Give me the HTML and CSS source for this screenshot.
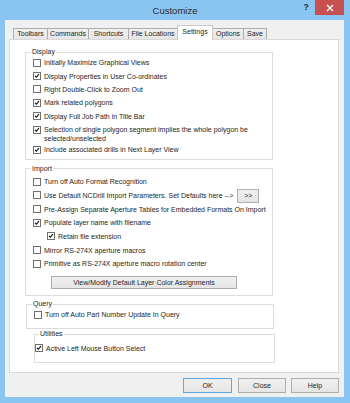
FILE: index.html
```html
<!DOCTYPE html>
<html>
<head>
<meta charset="utf-8">
<link rel="stylesheet" href="styles.css">
</head>
<body>
<div class="window">
  <div class="titlebar">
    <div></div>
    <div class="title">Customize</div>
    <div class="caption-btns">
      <div class="help-q">?</div>
      <div class="close-x">
        <svg width="8" height="8" viewBox="0 0 8 8"><path d="M1 1 L7 7 M7 1 L1 7" stroke="#fff" stroke-width="1.3"/></svg>
      </div>
    </div>
  </div>
  <div class="client">
    <div class="tabs">
      <div class="tab w-toolbars">Toolbars</div>
      <div class="tab w-commands">Commands</div>
      <div class="tab w-shortcuts">Shortcuts</div>
      <div class="tab w-files">File Locations</div>
      <div class="tab active w-settings">Settings</div>
      <div class="tab w-options">Options</div>
      <div class="tab w-save">Save</div>
    </div>
    <div class="panel">
      <fieldset class="group g-display">
        <legend>Display</legend>
        <div class="row"><span class="cb"></span><span class="lbl">Initially Maximize Graphical Views</span></div>
        <div class="row"><span class="cb on"><svg viewBox="0 0 8 8"><path d="M1.4 3.9 L3.1 5.7 L6.6 1.6" fill="none" stroke="#000" stroke-width="1.4"/></svg></span><span class="lbl">Display Properties in User Co-ordinates</span></div>
        <div class="row"><span class="cb"></span><span class="lbl">Right Double-Click to Zoom Out</span></div>
        <div class="row"><span class="cb on"><svg viewBox="0 0 8 8"><path d="M1.4 3.9 L3.1 5.7 L6.6 1.6" fill="none" stroke="#000" stroke-width="1.4"/></svg></span><span class="lbl">Mark related polygons</span></div>
        <div class="row"><span class="cb on"><svg viewBox="0 0 8 8"><path d="M1.4 3.9 L3.1 5.7 L6.6 1.6" fill="none" stroke="#000" stroke-width="1.4"/></svg></span><span class="lbl">Display Full Job Path in Title Bar</span></div>
        <div class="row wrap"><span class="cb on"><svg viewBox="0 0 8 8"><path d="M1.4 3.9 L3.1 5.7 L6.6 1.6" fill="none" stroke="#000" stroke-width="1.4"/></svg></span><span class="lbl wide">Selection of single polygon segment implies the whole polygon be selected/unselected</span></div>
        <div class="row"><span class="cb on"><svg viewBox="0 0 8 8"><path d="M1.4 3.9 L3.1 5.7 L6.6 1.6" fill="none" stroke="#000" stroke-width="1.4"/></svg></span><span class="lbl">Include associated drills in Next Layer View</span></div>
      </fieldset>
      <fieldset class="group g-import">
        <legend>Import</legend>
        <div class="row irow"><span class="cb"></span><span class="lbl">Turn off Auto Format Recognition</span></div>
        <div class="row irow"><span class="cb"></span><span class="lbl">Use Default NCDrill Import Parameters. Set Defaults here --&gt;</span><span class="btn small-btn">&gt;&gt;</span></div>
        <div class="row irow"><span class="cb"></span><span class="lbl">Pre-Assign Separate Aperture Tables for Embedded Formats On Import</span></div>
        <div class="row irow"><span class="cb on"><svg viewBox="0 0 8 8"><path d="M1.4 3.9 L3.1 5.7 L6.6 1.6" fill="none" stroke="#000" stroke-width="1.4"/></svg></span><span class="lbl">Populate layer name with filename</span></div>
        <div class="row irow indent"><span class="cb on"><svg viewBox="0 0 8 8"><path d="M1.4 3.9 L3.1 5.7 L6.6 1.6" fill="none" stroke="#000" stroke-width="1.4"/></svg></span><span class="lbl">Retain file extension</span></div>
        <div class="row irow"><span class="cb"></span><span class="lbl">Mirror RS-274X aperture macros</span></div>
        <div class="row irow"><span class="cb"></span><span class="lbl">Primitive as RS-274X aperture macro rotation center</span></div>
        <div class="btn wide-btn">View/Modify Default Layer Color Assignments</div>
      </fieldset>
      <fieldset class="group g-query">
        <legend>Query</legend>
        <div class="row"><span class="cb"></span><span class="lbl">Turn off Auto Part Number Update In Query</span></div>
      </fieldset>
      <fieldset class="group g-util">
        <legend>Utilities</legend>
        <div class="row"><span class="cb on"><svg viewBox="0 0 8 8"><path d="M1.4 3.9 L3.1 5.7 L6.6 1.6" fill="none" stroke="#000" stroke-width="1.4"/></svg></span><span class="lbl">Active Left Mouse Button Select</span></div>
      </fieldset>
    </div>
    <div class="buttons">
      <div class="btn dlg-btn default">OK</div>
      <div class="btn dlg-btn b-close">Close</div>
      <div class="btn dlg-btn b-help">Help</div>
    </div>
  </div>
</div>
</body>
</html>
```

FILE: styles.css
```css
html, body {
  margin: 0;
  padding: 0;
}
body {
  width: 350px;
  height: 403px;
  overflow: hidden;
  font-family: "Liberation Sans", Arial, sans-serif;
  font-size: 7px;
  color: #1e1e1e;
}
.window {
  width: 350px;
  height: 403px;
  background: #8ac4f0;
  display: flex;
  flex-direction: column;
  box-sizing: border-box;
}
.titlebar {
  height: 20px;
  display: grid;
  grid-template-columns: 1fr auto 1fr;
  flex: none;
}
.title {
  font-size: 9.5px;
  color: #2a2a2a;
  line-height: 20px;
  padding-top: 1px;
}
.caption-btns {
  display: flex;
  justify-content: flex-end;
  align-items: flex-start;
  padding-right: 6px;
}
.help-q {
  width: 20px;
  height: 15px;
  line-height: 15px;
  text-align: center;
  font-weight: bold;
  font-size: 8.5px;
  color: #1d2b3c;
  margin-right: -1px;
}
.close-x {
  width: 29px;
  height: 15px;
  background: #c75050;
  display: flex;
  align-items: center;
  justify-content: center;
}
.close-x svg { display: block; }
.client {
  flex: 1;
  margin: 0 6px 6px 5px;
  background: #f0f0f0;
  padding: 5px 5px 0 4px;
  display: flex;
  flex-direction: column;
}
.tabs {
  display: flex;
  align-items: flex-end;
  height: 14px;
  padding-left: 4px;
}
.tab {
  box-sizing: border-box;
  height: 11px;
  line-height: 10px;
  text-align: center;
  border: 1px solid #adadad;
  border-bottom: none;
  background: linear-gradient(#f0f0f0, #e5e5e5);
  white-space: nowrap;
  margin-right: -1px;
}
.tab.active {
  height: 15px;
  line-height: 12px;
  background: #fff;
  margin-bottom: -1px;
  position: relative;
  z-index: 1;
  border-color: #c8c8c8;
}
.w-toolbars { width: 35px; }
.w-commands { width: 42px; }
.w-shortcuts { width: 41px; }
.w-files { width: 50px; }
.w-settings { width: 36px; }
.w-options { width: 32px; }
.w-save { width: 24px; }
.panel {
  box-sizing: border-box;
  width: 330px;
  height: 334px;
  background: #fff;
  border: 1px solid #d9d9d9;
  display: flex;
  flex-direction: column;
  align-items: flex-start;
}
.group {
  box-sizing: border-box;
  border: 1px solid #dcdcdc;
  margin: 0;
  padding: 0 0 0 0;
  min-width: 0;
}
.group legend {
  line-height: 8px;
  padding: 0 1px;
  margin-left: 5px;
  color: #1e1e1e;
}
.g-display {
  width: 248px;
  margin: 8px 0 0 15px;
  padding-bottom: 2px;
}
.g-import {
  width: 248px;
  margin: 5px 0 0 15px;
  padding-top: 2.6px;
  padding-bottom: 6px;
}
.g-query {
  width: 248px;
  margin: 4px 0 0 16px;
  padding-bottom: 7px;
}
.g-util {
  width: 241px;
  margin: 1px 0 0 24px;
  padding-top: 3.3px;
  padding-bottom: 7px;
}
.g-util legend { margin-left: 4px; }
.row {
  box-sizing: border-box;
  height: 13.4px;
  padding: 2.2px 0 0 7px;
  display: flex;
  align-items: flex-start;
  line-height: 9px;
  white-space: nowrap;
}
.g-util .row { padding-left: 0; }
.row.wrap {
  height: 20.2px;
  white-space: normal;
}
.row.irow { height: 13.67px; }
.row.indent { padding-left: 21px; }
.cb {
  box-sizing: border-box;
  flex: none;
  width: 8px;
  height: 8px;
  margin-top: 0.5px;
  border: 1px solid #707070;
  background: #fff;
  margin-right: 3px;
  display: flex;
}
.cb svg {
  width: 6px;
  height: 6px;
  display: block;
}
.lbl.wide { width: 212px; }
.btn {
  box-sizing: border-box;
  border: 1px solid #adadad;
  background: linear-gradient(#f0f0f0, #e5e5e5);
  text-align: center;
  color: #1e1e1e;
}
.small-btn {
  width: 22px;
  height: 14px;
  line-height: 12px;
  margin: -2.2px 0 0 4px;
}
.wide-btn {
  width: 186px;
  height: 13px;
  line-height: 11px;
  margin: 5.3px 0 0 25px;
}
.buttons {
  display: flex;
  justify-content: flex-end;
  margin-top: 5px;
  padding-right: 0;
  width: 330px;
}
.dlg-btn {
  height: 15px;
  line-height: 13px;
  width: 48px;
  margin-left: 5px;
}
.dlg-btn.default {
  width: 49px;
  border-color: #5ea8e8;
}
.b-close { margin-left: 6px; }
```
